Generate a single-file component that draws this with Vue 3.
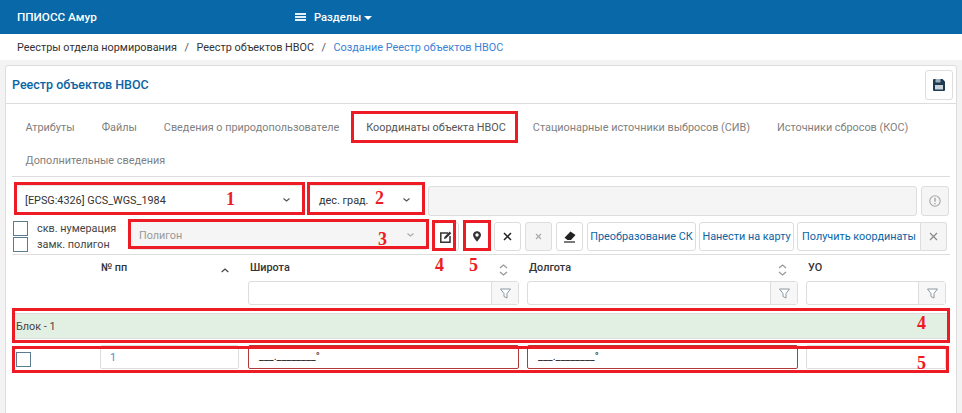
<script setup>
const tabs = [
  { label: 'Атрибуты' },
  { label: 'Файлы' },
  { label: 'Сведения о природопользователе' },
  { label: 'Координаты объекта НВОС' },
  { label: 'Стационарные источники выбросов (СИВ)' },
  { label: 'Источники сбросов (КОС)' },
  { label: 'Дополнительные сведения' }
]
const marks = [
  { text: '1', cls: 'm1' }, { text: '2', cls: 'm2' }, { text: '3', cls: 'm3' },
  { text: '4', cls: 'm4' }, { text: '5', cls: 'm5' }, { text: '4', cls: 'm6' }, { text: '5', cls: 'm7' }
]
const boxes = ['b1', 'b2', 'b3', 'b4', 'b5', 'b6', 'b7', 'b8']
</script>

<template>
  <div class="page">
    <header class="topbar">
      <span class="brand">ППИОСС Амур</span>
      <span class="menu">
        <svg class="burger" width="11" height="8" viewBox="0 0 11 8"><path d="M0 0h11v2H0zM0 3h11v2H0zM0 6h11v2H0z" fill="#fff" opacity=".9"/></svg>
        Разделы
        <i class="caret"></i>
      </span>
    </header>
    <nav class="crumbs">
      <span>Реестры отдела нормирования</span><span class="sep">/</span>
      <span>Реестр объектов НВОС</span><span class="sep">/</span>
      <span class="active">Создание Реестр объектов НВОС</span>
    </nav>
    <section class="card">
      <div class="card-head">
        <h1>Реестр объектов НВОС</h1>
        <button class="btn save">
          <svg width="12" height="12" viewBox="0 0 12 12"><path d="M1 0h8.500L12 2.500V11a1 1 0 0 1-1 1H1a1 1 0 0 1-1-1V1a1 1 0 0 1 1-1z" fill="#1c3a52"/><rect x="2.500" y="0" width="5" height="3.500" fill="#9fb0bd"/><rect x="2" y="6" width="8" height="4.500" fill="#c9d3da"/></svg>
        </button>
      </div>
      <div class="body">
        <div class="tabs">
          <a v-for="t in tabs" :key="t.label" :class="{ cur: t.label.startsWith('Координаты') }">{{ t.label }}</a>
        </div>
        <div class="row-a">
          <div class="select s1"><span>[EPSG:4326] GCS_WGS_1984</span><svg class="chev" width="7" height="4" viewBox="0 0 7 4"><path d="M.5.5l3 2.500 3-2.500" fill="none" stroke="#555" stroke-width="1.200"/></svg></div>
          <div class="select s2"><span>дес. град.</span><svg class="chev" width="7" height="4" viewBox="0 0 7 4"><path d="M.5.5l3 2.500 3-2.500" fill="none" stroke="#555" stroke-width="1.200"/></svg></div>
          <div class="ro-input"></div>
          <button class="btn disabled info">
            <svg width="12" height="12" viewBox="0 0 12 12"><circle cx="6" cy="6" r="5.200" fill="none" stroke="#a5a5a5" stroke-width="1.100"/><path d="M6 2.800v4M6 8v1.200" stroke="#a5a5a5" stroke-width="1.400"/></svg>
          </button>
        </div>
        <div class="row-b">
          <div class="checks">
            <label><i class="check"></i><span>скв. нумерация</span></label>
            <label><i class="check"></i><span>замк. полигон</span></label>
          </div>
          <div class="select s3"><span>Полигон</span><svg class="chev" width="7" height="4" viewBox="0 0 7 4"><path d="M.5.5l3 2.500 3-2.500" fill="none" stroke="#aaa" stroke-width="1.200"/></svg></div>
          <button class="btn ico">
            <svg width="12" height="12" viewBox="0 0 12 12"><path d="M8 2H.8v9.200H10V5" fill="none" stroke="#333" stroke-width="1.500"/><path d="M4 8l.4-2L9.600.6l1.700 1.700L6 7.600z" fill="#333"/></svg>
          </button>
          <button class="btn ico">
            <svg width="8" height="11" viewBox="0 0 9 12"><path fill-rule="evenodd" d="M4.500 0A4.300 4.300 0 0 1 9 4.300C9 7 6 9.500 4.500 12 3 9.500 0 7 0 4.300A4.300 4.300 0 0 1 4.500 0zm0 2.400a1.900 1.900 0 1 0 0 3.800 1.900 1.900 0 0 0 0-3.800z" fill="#333"/></svg>
          </button>
          <button class="btn ico">
            <svg width="9" height="9" viewBox="0 0 9 9"><path d="M1 1l7 7M8 1L1 8" stroke="#222" stroke-width="1.500"/></svg>
          </button>
          <button class="btn ico disabled">
            <svg width="7" height="7" viewBox="0 0 7 7"><path d="M1 1l5 5M6 1L1 6" stroke="#aaa" stroke-width="1.200"/></svg>
          </button>
          <button class="btn ico">
            <svg width="13" height="12" viewBox="0 0 13 12"><path d="M7.500.5L12.500 4 8 9H4.500L1.500 6.800z" fill="#222"/><path d="M1 11h11" stroke="#222" stroke-width="1.200"/></svg>
          </button>
          <button class="btn txt t1">Преобразование СК</button>
          <button class="btn txt t2">Нанести на карту</button>
          <div class="joined">
            <button class="btn txt t3">Получить координаты</button>
            <button class="btn disabled close">
              <svg width="9" height="9" viewBox="0 0 9 9"><path d="M1 1l7 7M8 1L1 8" stroke="#888" stroke-width="1.200"/></svg>
            </button>
          </div>
        </div>
        <div class="table">
          <div class="th c1">
            <span class="np">№ пп</span>
            <svg class="up" width="8" height="5" viewBox="0 0 8 5"><path d="M.7 4l3.300-3 3.300 3" fill="none" stroke="#444" stroke-width="1.200"/></svg>
          </div>
          <div class="th c2">
            <span>Широта</span>
            <svg class="sort" width="9" height="12" viewBox="0 0 9 12"><path d="M1 4l3.500-3L8 4M1 8l3.500 3L8 8" fill="none" stroke="#999" stroke-width="1.300"/></svg>
          </div>
          <div class="th c3">
            <span>Долгота</span>
            <svg class="sort" width="9" height="12" viewBox="0 0 9 12"><path d="M1 4l3.500-3L8 4M1 8l3.500 3L8 8" fill="none" stroke="#999" stroke-width="1.300"/></svg>
          </div>
          <div class="th c4"><span>УО</span></div>

          <div class="fc c1"></div>
          <div class="fc c2"><div class="filter"><i></i><b><svg width="11" height="11" viewBox="0 0 11 11"><path d="M.5 1h10L7 5.500V10L4 8.500v-3z" fill="#fff" stroke="#8a97a0"/></svg></b></div></div>
          <div class="fc c3"><div class="filter"><i></i><b><svg width="11" height="11" viewBox="0 0 11 11"><path d="M.5 1h10L7 5.500V10L4 8.500v-3z" fill="#fff" stroke="#8a97a0"/></svg></b></div></div>
          <div class="fc c4"><div class="filter"><i></i><b><svg width="11" height="11" viewBox="0 0 11 11"><path d="M.5 1h10L7 5.500V10L4 8.500v-3z" fill="#fff" stroke="#8a97a0"/></svg></b></div></div>

          <div class="group">Блок - 1</div>

          <div class="td c1">
            <i class="check"></i>
            <div class="cell num">1</div>
          </div>
          <div class="td c2"><div class="cell coord">___.________°</div></div>
          <div class="td c3"><div class="cell coord">___.________°</div></div>
          <div class="td c4"><div class="cell"></div></div>
        </div>
      </div>
    </section>
    <div v-for="b in boxes" :key="b" class="redbox" :class="b"></div>
    <span v-for="m in marks" :key="m.cls" class="mark" :class="m.cls">{{ m.text }}</span>
  </div>
</template>

<style>
html, body { margin: 0; background: #f3f3f3; }
</style>

<style scoped>
.page { position: relative; width: 962px; height: 413px; overflow: hidden; font-family: Roboto, "Liberation Sans", sans-serif; font-size: 10.850px; color: #333; background: #f3f3f3; }
.topbar { height: 34px; background: #0868a8; color: #fff; display: flex; align-items: center; padding-left: 17px; box-sizing: border-box; }
.brand { font-size: 11.700px; font-weight: 500; width: 278px; }
.menu { display: flex; align-items: center; font-size: 11.200px; font-weight: 500; }
.burger { margin-right: 8px; }
.caret { width: 0; height: 0; margin-left: 3px; margin-top: 2px; border: 4px solid transparent; border-top-color: #fff; border-bottom: 0; }
.crumbs { height: 26px; background: #fff; display: flex; align-items: center; padding-left: 17px; color: #333; }
.sep { margin: 0 7.500px; color: #555; }
.active { color: #3b82d6; }
.card { margin: 5px 5px 0; width: 952px; height: 360px; box-sizing: border-box; background: #fff; border: 1px solid #ddd; border-radius: 3px; }
.card-head { height: 38px; box-sizing: border-box; border-bottom: 1px solid #ddd; display: flex; align-items: center; justify-content: space-between; padding: 0 3px 0 6px; }
h1 { margin: 0; font-size: 12.500px; font-weight: 500; color: #0a64a4; }
.btn { box-sizing: border-box; background: #fff; border: 1px solid #ddd; border-radius: 3px; padding: 0; display: flex; align-items: center; justify-content: center; font-family: inherit; font-size: 10.850px; }
.save { width: 28px; height: 30px; }
.body { padding: 0 6px; }
.tabs { display: flex; flex-wrap: wrap; padding: 7px 0 0; height: 65px; border-bottom: 1px solid #ddd; align-content: flex-start; }
.tabs a { line-height: 33px; padding: 0 13.500px; color: #7f7f7f; white-space: nowrap; }
.tabs a.cur { color: #555; }
.row-a { display: flex; align-items: flex-start; height: 41px; padding: 9px 0 0 3px; box-sizing: border-box; }
.select { box-sizing: border-box; height: 30px; display: flex; align-items: center; justify-content: space-between; padding: 0 12px 0 9px; border: 1px solid #e6e6e6; border-radius: 3px; background: #fff; color: #333; }
.s1 { width: 288px; margin-right: 6px; margin-top: -1px; }
.s2 { width: 114px; margin-right: 5px; margin-top: -1px; }
.ro-input { flex: none; width: 489px; height: 30px; box-sizing: border-box; background: #f5f5f5; border: 1px solid #ddd; border-radius: 3px; }
.disabled { background: #f5f5f5; }
.info { width: 28px; height: 30px; margin-left: 4px; }
.row-b { display: flex; align-items: flex-start; height: 37px; border-bottom: 1px solid #ddd; padding: 4px 0 3px; box-sizing: border-box; }
.checks { width: 117px; display: flex; flex-direction: column; padding-left: 1px; box-sizing: border-box; margin-top: -1px; }
.checks label { display: flex; align-items: center; height: 15.500px; gap: 9px; color: #444; }
.check { display: block; width: 15px; height: 15px; box-sizing: border-box; border: 1px solid #5b7c8e; background: #fff; flex: none; }
.s3 { width: 299px; height: 30px; margin-top: -2px; background: #f5f5f5; color: #999; margin-right: 4px; padding: 0 13px 0 9px; }
.ico { width: 27px; height: 29px; margin-right: 4px; }
.txt { height: 29px; color: #0a64a4; white-space: nowrap; }
.t1 { width: 109px; margin-right: 3px; }
.t2 { width: 95px; margin-right: 3px; }
.joined { display: flex; }
.t3 { width: 124px; border-radius: 3px 0 0 3px; }
.close { width: 26px; height: 29px; border-radius: 0 3px 3px 0; border-left: 0; }
.table { display: grid; grid-template-columns: 232px 279px 279px 148px; grid-template-rows: 25px 28px 37px 24px; }
.th { display: flex; align-items: center; font-weight: 500; color: #333; position: relative; }
.th.c2, .th.c3, .th.c4 { padding-left: 6px; }
.np { margin-left: 89px; }
.up { position: absolute; right: 15px; top: 13px; }
.sort { position: absolute; right: 15px; top: 9px; }
.fc { padding: 1px 4px 0; box-sizing: border-box; }
.filter { display: flex; height: 24px; border: 1px solid #ddd; border-radius: 3px; box-sizing: border-box; }
.filter i { flex: 1; }
.filter b { width: 26px; border-left: 1px solid #ddd; background: #f7f7f7; display: flex; align-items: center; justify-content: center; }
.group { grid-column: 1 / -1; background: #e2f0e3; height: 26px; margin-top: 5px; line-height: 25px; padding-left: 4px; border-top: 1px solid #ddd; border-bottom: 1px solid #ddd; box-sizing: border-box; color: #444; }
.td { padding: 0 4px; display: flex; align-items: center; box-sizing: border-box; }
.td.c1 { padding: 0 5px 0 4px; }
.td.c1 .check { margin-right: 69px; margin-top: 4px; }
.cell { flex: 1; height: 24px; box-sizing: border-box; border: 1px solid #ddd; border-radius: 2px; padding-left: 9px; line-height: 23px; }
.num { color: #4a8fd0; }
.coord { border-color: #b03a3a; color: #222; padding-left: 10px; line-height: 22px; }
.redbox { position: absolute; box-sizing: border-box; border: 3px solid #ed1c24; pointer-events: none; }
.b1 { left: 351px; top: 111px; width: 167px; height: 32px; }
.b2 { left: 14px; top: 182px; width: 291px; height: 33px; }
.b3 { left: 307px; top: 182px; width: 118px; height: 33px; }
.b4 { left: 128px; top: 219px; width: 301px; height: 30px; }
.b5 { left: 432px; top: 220px; width: 24px; height: 31px; }
.b6 { left: 463px; top: 220px; width: 28px; height: 31px; }
.b7 { left: 12px; top: 308px; width: 938px; height: 35px; }
.b8 { left: 12px; top: 346px; width: 937px; height: 27px; }
.mark { position: absolute; font-family: "Liberation Serif", serif; font-weight: 700; font-size: 18px; line-height: 18px; color: #ed1c24; }
.m1 { left: 226px; top: 190px; }
.m2 { left: 375px; top: 189px; }
.m3 { left: 378px; top: 230px; }
.m4 { left: 435px; top: 256px; }
.m5 { left: 469px; top: 256px; }
.m6 { left: 917px; top: 314px; }
.m7 { left: 917px; top: 354px; }
</style>
